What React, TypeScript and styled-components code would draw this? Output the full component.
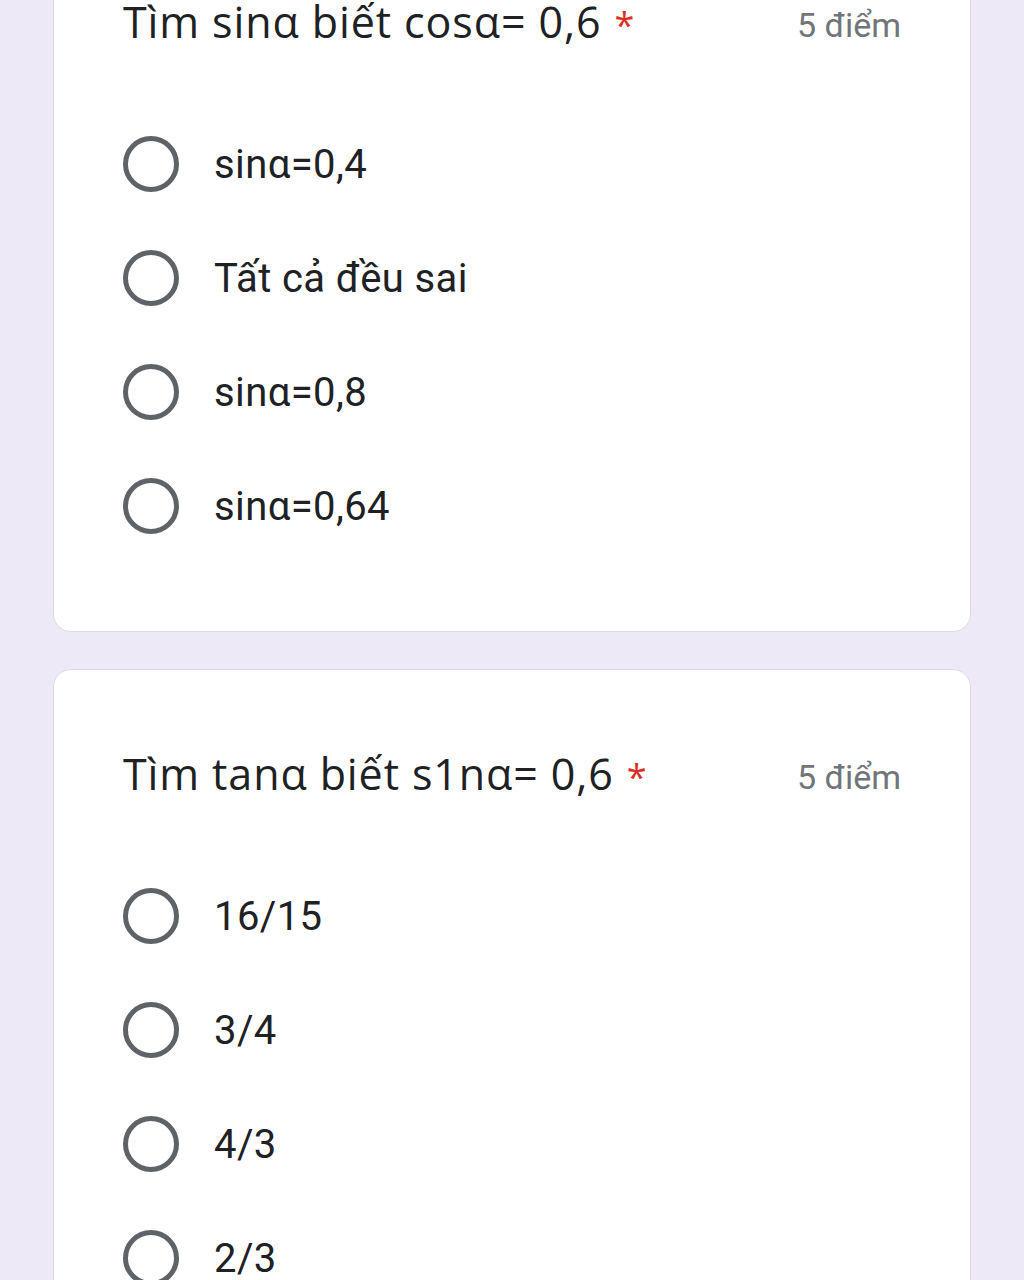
import styled, { createGlobalStyle } from 'styled-components';

const GlobalStyle = createGlobalStyle`
    html, body {
        margin: 0;
        padding: 0;
        background: #ede9f7;
    }
    * {
        box-sizing: border-box;
    }
`;

interface Question {
    title: string;
    points: string;
    options: Array<string>;
}

const questions: Array<Question> = [
    {
        title: 'Tìm sinα biết cosα= 0,6',
        points: '5 điểm',
        options: ['sinα=0,4', 'Tất cả đều sai', 'sinα=0,8', 'sinα=0,64'],
    },
    {
        title: 'Tìm tanα biết s1nα= 0,6',
        points: '5 điểm',
        options: ['16/15', '3/4', '4/3', '2/3'],
    },
];

const Page = styled.div`
    width: 1024px;
    height: 1280px;
    overflow: hidden;
    background: #ede9f7;
    padding: 0 53px;
`;

const List = styled.div`
    display: flex;
    flex-direction: column;
    gap: 37px;
    margin-top: -83px;
`;

const Card = styled.div`
    background: #ffffff;
    border: 1.5px solid #dadce0;
    border-radius: 18px;
    padding: 81px 69px 68px 69px;
`;

const Header = styled.div`
    display: flex;
    flex-direction: row;
    justify-content: space-between;
    align-items: center;
    height: 48px;
`;

const Title = styled.div`
    font-family: 'Open Sans', 'Liberation Sans', sans-serif;
    font-size: 43px;
    line-height: 48px;
    letter-spacing: 0.9px;
    color: #202124;

    & > span {
        color: #d93025;
        margin-left: 13px;
        font-size: 36px;
    }
`;

const Points = styled.div`
    font-family: 'Roboto', 'Liberation Sans', sans-serif;
    font-size: 34px;
    color: #70757a;
    padding-top: 4px;
`;

const Options = styled.div`
    display: flex;
    flex-direction: column;
    margin-top: 60px;
`;

const Option = styled.div`
    display: flex;
    flex-direction: row;
    align-items: center;
    height: 114px;
    gap: 35px;
`;

const Radio = styled.div`
    width: 56px;
    height: 56px;
    border-radius: 50%;
    border: 5px solid #5f6368;
    flex-shrink: 0;
`;

const Label = styled.div`
    font-family: 'Roboto', 'Liberation Sans', sans-serif;
    font-size: 40px;
    letter-spacing: 0.4px;
    color: #202124;
`;

export default function App() {
    return (
        <Page>
            <GlobalStyle />
            <List>
                {questions.map((q, index) => (
                    <Card key={index}>
                        <Header>
                            <Title>
                                {q.title}
                                <span>*</span>
                            </Title>
                            <Points>{q.points}</Points>
                        </Header>
                        <Options>
                            {q.options.map((o, i) => (
                                <Option key={i}>
                                    <Radio />
                                    <Label>{o}</Label>
                                </Option>
                            ))}
                        </Options>
                    </Card>
                ))}
            </List>
        </Page>
    );
}
